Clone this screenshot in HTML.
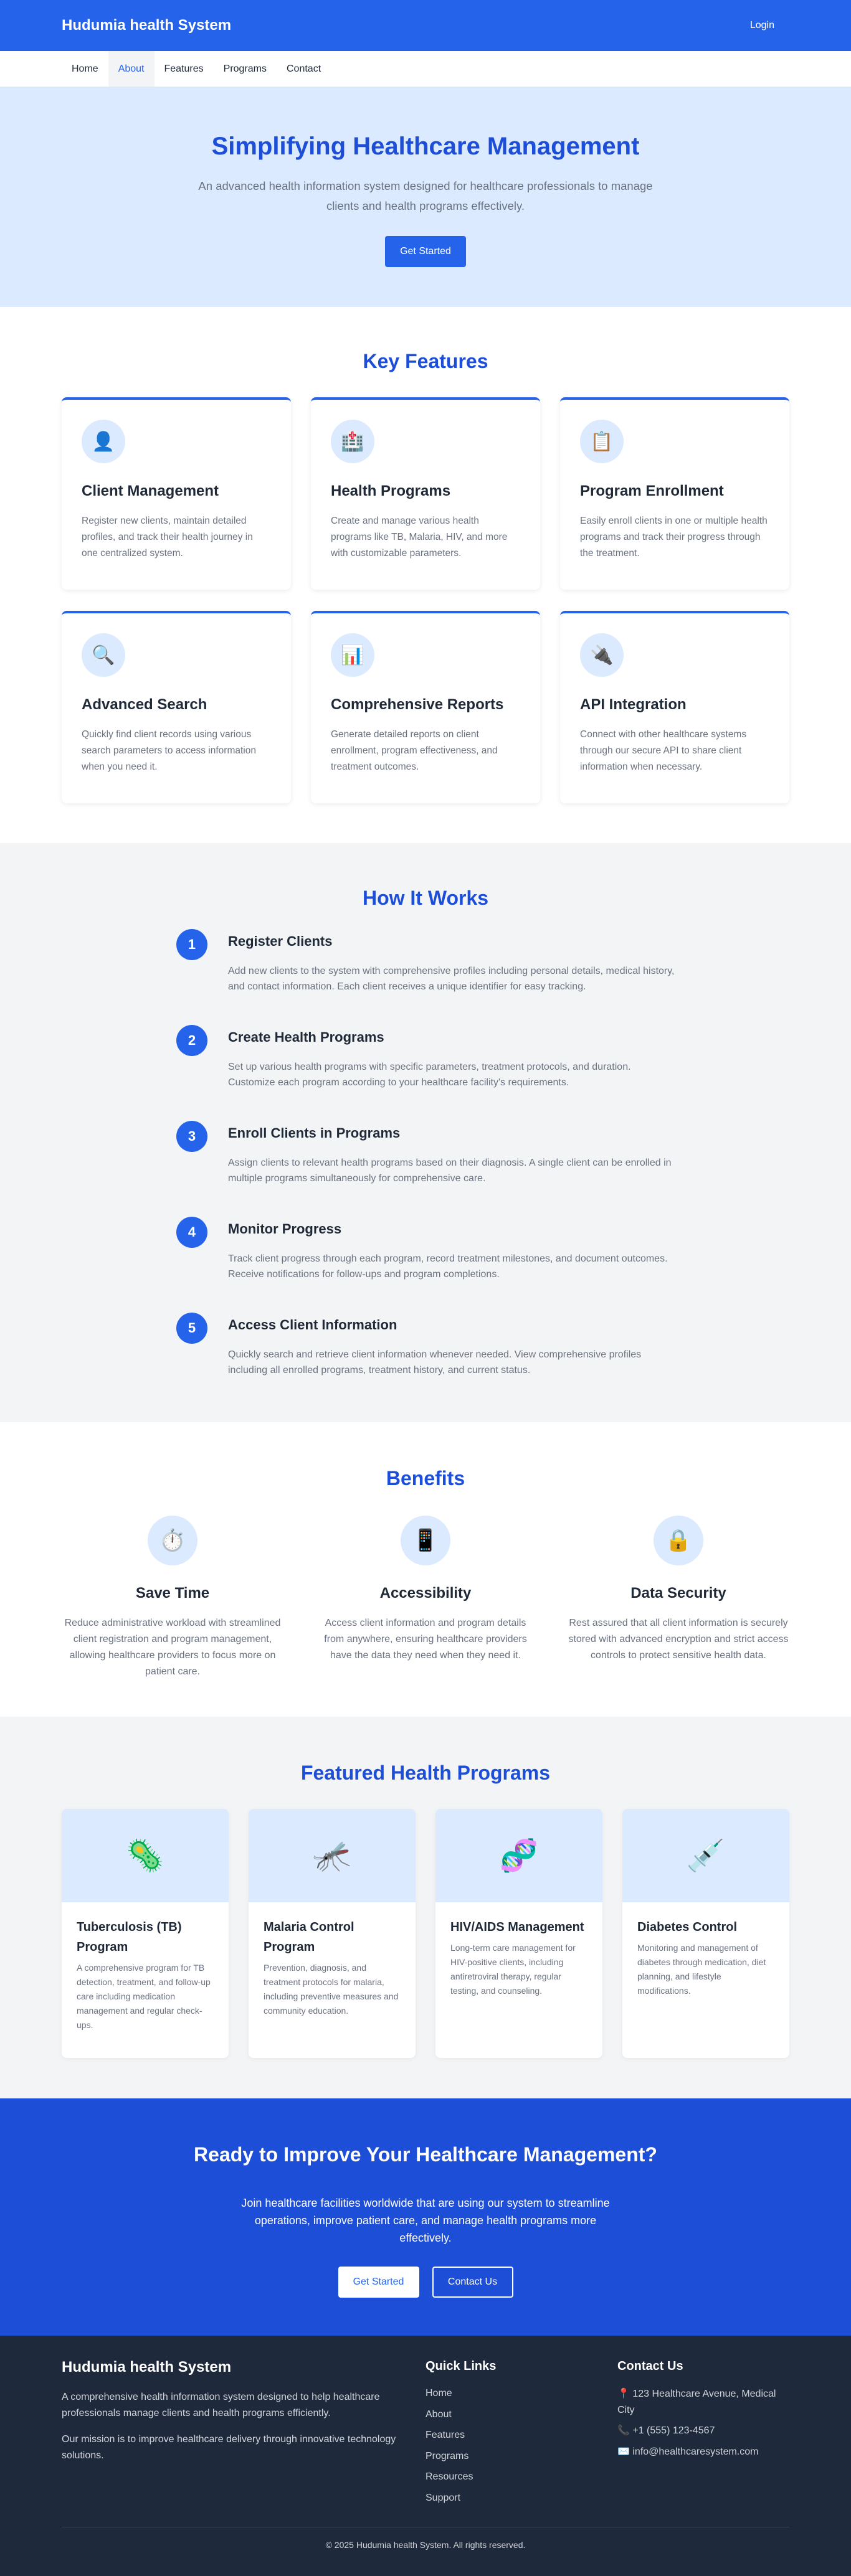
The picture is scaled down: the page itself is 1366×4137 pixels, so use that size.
<!DOCTYPE html>
<html><head><meta charset="utf-8"><style>
*{box-sizing:border-box;margin:0;padding:0}
body{width:1366px;font-family:"Liberation Sans",Arial,sans-serif;color:#1f2937;background:#fff}
.wrap{width:1168px;margin:0 auto}
header{height:82px;background:#2563eb;color:#fff}
header .wrap{display:flex;justify-content:space-between;align-items:center;height:82px}
header h1{font-size:24px;font-weight:bold}
header .login{font-size:16px;margin-right:24px}
nav{height:57px;background:#fff}
nav .wrap{display:flex;height:57px;padding-left:0}
nav a{display:block;line-height:57px;padding:0 16px;font-size:16px;color:#1f2937;text-decoration:none}
nav a.act{background:#f3f4f6;color:#2563eb}
.hero{height:354px;background:#dbeafe;text-align:center;padding-top:70px}
.hero h2{font-size:40px;color:#1d4ed8;font-weight:bold;line-height:52px}
.hero p{font-size:18.5px;color:#6b7280;line-height:32px;width:800px;margin:22px auto 0}
.btn{display:inline-block;background:#2563eb;color:#fff;font-size:16px;border-radius:4px;height:50px;line-height:50px;padding:0 24px}
.hero .btn{margin-top:32px}
.sec-title{font-size:32px;color:#1d4ed8;font-weight:bold;text-align:center;line-height:40px}
.features{height:861px;padding-top:67px}
.grid3{display:grid;grid-template-columns:repeat(3,368px);gap:34px 32px;margin-top:38px}
.card{height:309px;background:#fff;border-top:4px solid #2563eb;border-radius:8px;box-shadow:0 2px 8px rgba(0,0,0,.08);padding:32px 32px}
.icon{width:70px;height:70px;border-radius:50%;background:#dbeafe;display:flex;align-items:center;justify-content:center;font-size:30px;font-family:"DejaVu Sans",sans-serif}
.card h3{font-size:24px;margin-top:30px;line-height:30px;font-weight:bold}
.card p{font-size:15.5px;color:#6b7280;line-height:26px;margin-top:20px}
.how{background:#f3f4f6;height:930px;padding-top:68px}
.steps{width:800px;margin:36px auto 0}
.step{display:flex;height:154px}
.num{width:50px;height:50px;border-radius:50%;background:#2563eb;color:#fff;font-size:22px;font-weight:bold;display:flex;align-items:center;justify-content:center;flex:none;margin-right:33px;margin-top:-6px}
.step h3{font-size:22px;font-weight:bold;line-height:28px;margin-top:0}
.step p{font-size:16px;color:#6b7280;line-height:25px;margin-top:21px}
.benefits{height:473px;padding-top:70px}
.b3{display:grid;grid-template-columns:repeat(3,356px);gap:0 50px;margin-top:40px;text-align:center}
.b3 .icon{width:80px;height:80px;margin:0 auto;font-size:34px}
.b3 h3{font-size:24px;font-weight:bold;margin-top:30px;line-height:30px}
.b3 p{font-size:16px;color:#6b7280;line-height:26px;margin-top:20px}
.programs{background:#f3f4f6;height:613px;padding-top:70px}
.g4{display:grid;grid-template-columns:repeat(4,268px);gap:32px;margin-top:38px}
.pc{background:#fff;border-radius:8px;overflow:hidden;height:400px;box-shadow:0 2px 8px rgba(0,0,0,.05)}
.pc .img{height:150px;background:#dbeafe;display:flex;align-items:center;justify-content:center;font-size:50px;font-family:"DejaVu Sans",sans-serif}
.pc .b{padding:24px}
.pc h3{font-size:20px;font-weight:bold;line-height:32px}
.pc p{font-size:14px;color:#6b7280;line-height:23px;margin-top:6px}
.cta{background:#1d4ed8;height:381px;text-align:center;color:#fff;padding-top:68px}
.cta h2{font-size:32px;font-weight:bold;line-height:44px}
.cta p{font-size:18px;line-height:28px;width:600px;margin:42px auto 0}
.cta .btns{margin-top:32px;display:flex;justify-content:center;gap:21px}
.cta .b1{background:#fff;color:#2563eb;width:130px;height:50px;line-height:50px;border-radius:4px;font-size:16px}
.cta .b2{border:2px solid #fff;color:#fff;width:130px;height:50px;line-height:46px;border-radius:4px;font-size:16px}
footer{background:#1e293b;height:386px;color:#d1d5db;padding-top:34px}
.fg{display:grid;grid-template-columns:552px 276px 276px;gap:32px}
footer h3{color:#fff;font-size:24px;font-weight:bold;line-height:34px}
footer h4{color:#fff;font-size:20px;font-weight:bold;line-height:30px}
footer p{font-size:16px;line-height:26px}
.links div{font-size:16px;line-height:33.5px}
hr{border:0;border-top:1px solid #374151;margin-top:30px}
.copy{text-align:center;font-size:14px;margin-top:20px}
</style></head><body>
<header><div class="wrap"><h1>Hudumia health System</h1><span class="login">Login</span></div></header>
<nav><div class="wrap"><a>Home</a><a class="act">About</a><a>Features</a><a>Programs</a><a>Contact</a></div></nav>
<section class="hero"><h2>Simplifying Healthcare Management</h2><p>An advanced health information system designed for healthcare professionals to manage<br>clients and health programs effectively.</p><span class="btn">Get Started</span></section>
<section class="features"><div class="wrap"><div class="sec-title">Key Features</div>
<div class="grid3">
<div class="card"><div class="icon">👤</div><h3>Client Management</h3><p>Register new clients, maintain detailed profiles, and track their health journey in one centralized system.</p></div>
<div class="card"><div class="icon">🏥</div><h3>Health Programs</h3><p>Create and manage various health programs like TB, Malaria, HIV, and more with customizable parameters.</p></div>
<div class="card"><div class="icon">📋</div><h3>Program Enrollment</h3><p>Easily enroll clients in one or multiple health programs and track their progress through the treatment.</p></div>
<div class="card"><div class="icon">🔍</div><h3>Advanced Search</h3><p>Quickly find client records using various search parameters to access information when you need it.</p></div>
<div class="card"><div class="icon">📊</div><h3>Comprehensive Reports</h3><p>Generate detailed reports on client enrollment, program effectiveness, and treatment outcomes.</p></div>
<div class="card"><div class="icon">🔌</div><h3>API Integration</h3><p>Connect with other healthcare systems through our secure API to share client information when necessary.</p></div>
</div></div></section>
<section class="how"><div class="sec-title">How It Works</div>
<div class="steps">
<div class="step"><div class="num">1</div><div><h3>Register Clients</h3><p>Add new clients to the system with comprehensive profiles including personal details, medical history, and contact information. Each client receives a unique identifier for easy tracking.</p></div></div>
<div class="step"><div class="num">2</div><div><h3>Create Health Programs</h3><p>Set up various health programs with specific parameters, treatment protocols, and duration. Customize each program according to your healthcare facility's requirements.</p></div></div>
<div class="step"><div class="num">3</div><div><h3>Enroll Clients in Programs</h3><p>Assign clients to relevant health programs based on their diagnosis. A single client can be enrolled in multiple programs simultaneously for comprehensive care.</p></div></div>
<div class="step"><div class="num">4</div><div><h3>Monitor Progress</h3><p>Track client progress through each program, record treatment milestones, and document outcomes. Receive notifications for follow-ups and program completions.</p></div></div>
<div class="step"><div class="num">5</div><div><h3>Access Client Information</h3><p>Quickly search and retrieve client information whenever needed. View comprehensive profiles including all enrolled programs, treatment history, and current status.</p></div></div>
</div></section>
<section class="benefits"><div class="wrap"><div class="sec-title">Benefits</div>
<div class="b3">
<div><div class="icon">⏱️</div><h3>Save Time</h3><p>Reduce administrative workload with streamlined client registration and program management, allowing healthcare providers to focus more on patient care.</p></div>
<div><div class="icon">📱</div><h3>Accessibility</h3><p>Access client information and program details from anywhere, ensuring healthcare providers have the data they need when they need it.</p></div>
<div><div class="icon">🔒</div><h3>Data Security</h3><p>Rest assured that all client information is securely stored with advanced encryption and strict access controls to protect sensitive health data.</p></div>
</div></div></section>
<section class="programs"><div class="wrap"><div class="sec-title">Featured Health Programs</div>
<div class="g4">
<div class="pc"><div class="img">🦠</div><div class="b"><h3>Tuberculosis (TB) Program</h3><p>A comprehensive program for TB detection, treatment, and follow-up care including medication management and regular check-ups.</p></div></div>
<div class="pc"><div class="img">🦟</div><div class="b"><h3>Malaria Control Program</h3><p>Prevention, diagnosis, and treatment protocols for malaria, including preventive measures and community education.</p></div></div>
<div class="pc"><div class="img">🧬</div><div class="b"><h3>HIV/AIDS Management</h3><p>Long-term care management for HIV-positive clients, including antiretroviral therapy, regular testing, and counseling.</p></div></div>
<div class="pc"><div class="img">💉</div><div class="b"><h3>Diabetes Control</h3><p>Monitoring and management of diabetes through medication, diet planning, and lifestyle modifications.</p></div></div>
</div></div></section>
<section class="cta"><h2>Ready to Improve Your Healthcare Management?</h2><p>Join healthcare facilities worldwide that are using our system to streamline operations, improve patient care, and manage health programs more effectively.</p>
<div class="btns"><span class="b1">Get Started</span><span class="b2">Contact Us</span></div></section>
<footer><div class="wrap"><div class="fg">
<div><h3>Hudumia health System</h3><p style="margin-top:18px">A comprehensive health information system designed to help healthcare professionals manage clients and health programs efficiently.</p><p style="margin-top:16px">Our mission is to improve healthcare delivery through innovative technology solutions.</p></div>
<div class="links"><h4>Quick Links</h4><div style="margin-top:12px">Home</div><div>About</div><div>Features</div><div>Programs</div><div>Resources</div><div>Support</div></div>
<div><h4>Contact Us</h4><p style="margin-top:17px">📍 123 Healthcare Avenue, Medical City</p><p style="margin-top:7px">📞 +1 (555) 123-4567</p><p style="margin-top:8px">✉️ info@healthcaresystem.com</p></div>
</div><hr><div class="copy">© 2025 Hudumia health System. All rights reserved.</div></div></footer>
</body></html>
